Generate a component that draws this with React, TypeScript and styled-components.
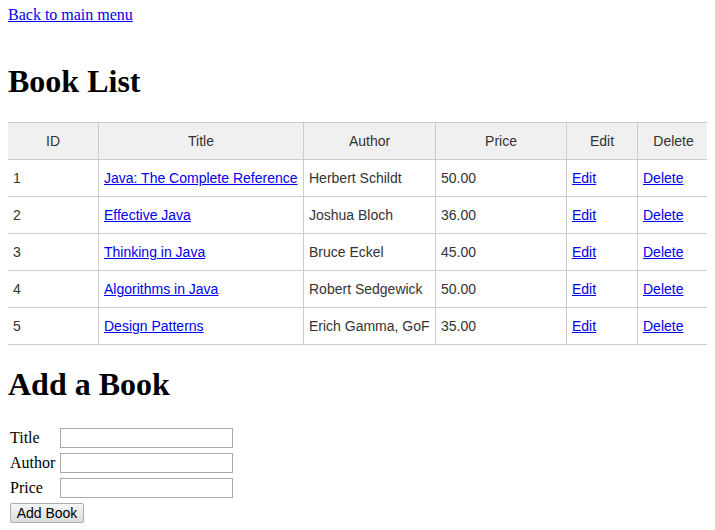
import React from "react";
import styled, { createGlobalStyle } from "styled-components";

const Global = createGlobalStyle`
  body {
    margin: 8px;
    font-family: "Liberation Serif", "Times New Roman", serif;
    font-size: 16px;
    color: #000;
    background: #fff;
  }
`;

const Link = styled.a`
  color: #0000ee;
  text-decoration: underline;
  cursor: pointer;
`;

const TopLink = styled.div`
  line-height: 18px;
  margin-top: -2px;
  padding-bottom: 18px;
`;

const Heading = styled.h1`
  font-family: "Liberation Serif", "Times New Roman", serif;
  font-size: 32px;
  font-weight: bold;
  margin: 21.44px 0;
  line-height: 37px;
`;

const Table = styled.table`
  border-collapse: collapse;
  width: 702px;
  margin-left: -1px;
  table-layout: fixed;
  font-family: "Liberation Sans", Arial, sans-serif;
  font-size: 14px;
  color: #333;
`;

const Th = styled.th`
  background: #f0f0f0;
  border: 1px solid #ccc;
  padding: 10px 5px;
  font-weight: normal;
  text-align: center;
  line-height: 16px;
`;

const Td = styled.td`
  border: 1px solid #ccc;
  padding: 10px 5px;
  text-align: left;
  line-height: 16px;
  white-space: nowrap;
`;

const Form = styled.form`
  display: grid;
  grid-template-columns: 46px 173px;
  column-gap: 4px;
  row-gap: 5px;
  margin-top: 25px;
  padding-left: 2px;
  align-items: center;
`;

const Label = styled.label`
  font-size: 16px;
  line-height: 20px;
`;

const Input = styled.input`
  box-sizing: border-box;
  width: 173px;
  height: 20px;
  border: 1px solid #a9a9a9;
  padding: 1px 2px;
  margin: 0;
  font-size: 13px;
`;

const Button = styled.button`
  grid-column: 1 / span 2;
  justify-self: start;
  box-sizing: border-box;
  width: 74px;
  height: 20px;
  margin: 0;
  padding: 0;
  white-space: nowrap;
  border: 1px solid #adadad;
  border-radius: 2px;
  background: linear-gradient(#f6f6f6, #dddddd);
  font-family: "Liberation Sans", Arial, sans-serif;
  font-size: 14px;
  color: #000;
  line-height: 16px;
`;

const books = [
  { id: 1, title: "Java: The Complete Reference", author: "Herbert Schildt", price: "50.00" },
  { id: 2, title: "Effective Java", author: "Joshua Bloch", price: "36.00" },
  { id: 3, title: "Thinking in Java", author: "Bruce Eckel", price: "45.00" },
  { id: 4, title: "Algorithms in Java", author: "Robert Sedgewick", price: "50.00" },
  { id: 5, title: "Design Patterns", author: "Erich Gamma, GoF", price: "35.00" },
];

const widths = [91, 205, 132, 131, 71, 72];

export default function App() {
  return (
    <>
      <Global />
      <TopLink>
        <Link>Back to main menu</Link>
      </TopLink>
      <Heading>Book List</Heading>
      <Table>
        <colgroup>
          {widths.map((w, i) => (
            <col key={i} style={{ width: w }} />
          ))}
        </colgroup>
        <thead>
          <tr>
            <Th>ID</Th>
            <Th>Title</Th>
            <Th>Author</Th>
            <Th>Price</Th>
            <Th>Edit</Th>
            <Th>Delete</Th>
          </tr>
        </thead>
        <tbody>
          {books.map((b) => (
            <tr key={b.id}>
              <Td>{b.id}</Td>
              <Td>
                <Link>{b.title}</Link>
              </Td>
              <Td>{b.author}</Td>
              <Td>{b.price}</Td>
              <Td>
                <Link>Edit</Link>
              </Td>
              <Td>
                <Link>Delete</Link>
              </Td>
            </tr>
          ))}
        </tbody>
      </Table>
      <Heading>Add a Book</Heading>
      <Form onSubmit={(e) => e.preventDefault()}>
        <Label>Title</Label>
        <Input type="text" />
        <Label>Author</Label>
        <Input type="text" />
        <Label>Price</Label>
        <Input type="text" />
        <Button type="submit">Add Book</Button>
      </Form>
    </>
  );
}
